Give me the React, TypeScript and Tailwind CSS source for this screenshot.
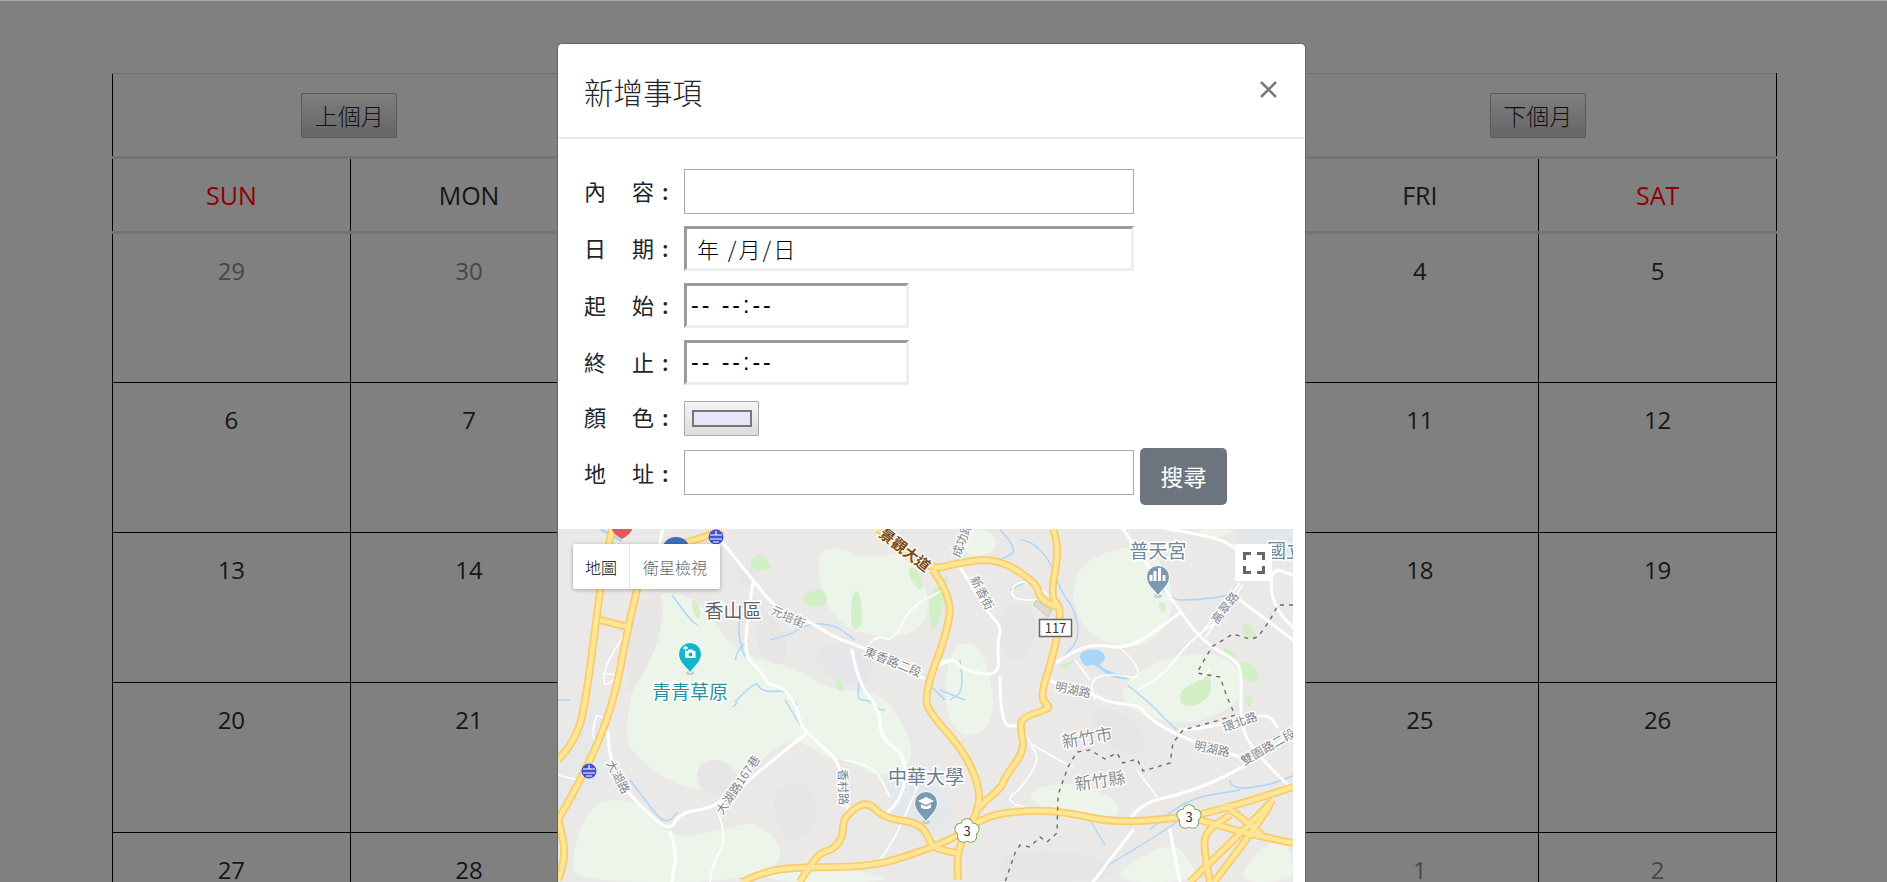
import React from "react";

const weeks: [string, boolean][][] = [
  [["29", true], ["30", true], ["1", false], ["2", false], ["3", false], ["4", false], ["5", false]],
  [["6", false], ["7", false], ["8", false], ["9", false], ["10", false], ["11", false], ["12", false]],
  [["13", false], ["14", false], ["15", false], ["16", false], ["17", false], ["18", false], ["19", false]],
  [["20", false], ["21", false], ["22", false], ["23", false], ["24", false], ["25", false], ["26", false]],
  [["27", false], ["28", false], ["29", false], ["30", false], ["31", false], ["1", true], ["2", true]],
];
const days = ["SUN", "MON", "TUE", "WED", "THU", "FRI", "SAT"];

function smooth(p: string, closed = false) {
  const pts = p.trim().split(/\s+/).map((s) => s.split(",").map(Number));
  if (pts.length < 3) return `M${pts.map((q) => q.join(" ")).join("L")}`;
  const mid = (a: number[], b: number[]) => [(a[0] + b[0]) / 2, (a[1] + b[1]) / 2];
  if (closed) {
    const n = pts.length;
    const s = mid(pts[n - 1], pts[0]);
    let d = `M${s[0]} ${s[1]}`;
    pts.forEach((q, i) => {
      const m = mid(q, pts[(i + 1) % n]);
      d += `Q${q[0]} ${q[1]} ${m[0]} ${m[1]}`;
    });
    return d + "Z";
  }
  let d = `M${pts[0][0]} ${pts[0][1]}`;
  for (let i = 1; i < pts.length - 1; i++) {
    const m = mid(pts[i], pts[i + 1]);
    d += `Q${pts[i][0]} ${pts[i][1]} ${m[0]} ${m[1]}`;
  }
  const l = pts[pts.length - 1];
  return d + `L${l[0]} ${l[1]}`;
}

const grayPatches = [
  "640,600 665,590 660,640 640,680 625,700 628,640",
  "760,600 790,640 780,670 755,650",
  "700,760 730,760 745,790 715,800 695,785",
  "770,790 800,780 820,800 810,840 780,840",
  "1000,600 1040,610 1030,660 1000,660",
  "1090,700 1140,720 1150,760 1090,740",
  "1000,850 1080,850 1120,870 1100,882 1000,882",
];
const lightGreen = [
  "660,590 700,600 735,655 790,665 830,690 860,690 890,700 920,760 880,780 850,760 830,760 800,740 780,745 760,760 740,780 720,790 690,790 660,775 640,760 625,740 630,700 640,660 655,610",
  "590,800 640,800 670,840 720,830 760,820 790,860 740,882 580,882 570,860",
  "815,560 830,545 870,560 900,550 930,590 925,630 880,640 830,620",
  "1080,560 1150,540 1180,600 1150,650 1090,640 1070,600",
  "1150,660 1230,650 1250,700 1180,730 1110,700",
  "1100,882 1170,840 1190,860 1200,882",
  "1230,882 1280,830 1293,860 1293,882",
  "947,650 975,640 990,670 995,720 970,740 945,720",
  "1025,790 1080,780 1130,810 1090,825 1040,810",
  "750,882 790,860 860,870 900,882",
  "960,529 990,529 1000,550 965,560",
  "1190,529 1240,529 1215,540",
];
const green = [
  "750,560 760,552 773,565 768,571 752,570",
  "803,592 826,588 828,606 804,608",
  "852,592 860,590 863,628 850,630",
  "906,570 915,566 925,585 918,592",
  "834,680 840,677 845,690 838,692",
  "691,597 698,604 702,618 694,618",
  "1158,605 1162,600 1168,608 1162,614",
  "1248,621 1258,636 1250,640 1240,630",
  "1180,690 1200,680 1210,672 1212,695 1195,707 1180,705",
  "1240,660 1255,665 1260,680 1248,684 1240,675",
  "1222,646 1232,650 1238,660 1228,660",
  "1060,665 1075,660 1068,668 1060,670",
  "1245,695 1252,695 1252,705 1246,708",
  "950,570 934,590 928,600 932,640 945,600",
];
const yellow = [
  "558,760 577,740 587,693 600,590 606,560 612,529",
  "558,820 565,843 563,867 558,880",
  "558,820 583,777 613,707 628,627 638,587 643,553 687,543 723,530",
  "600,620 628,627",
  "878,529 905,550 933,570 957,563 997,558 1037,583 1040,600 1060,608",
  "1053,529 1060,547 1050,597 1062,608 1055,650 1042,690 1043,702 1052,708 1023,717 1020,727 1025,750 1005,777 1002,787 983,803 978,810",
  "933,570 952,597 947,633 923,697 933,717 963,750 980,787 978,813 957,848 958,880",
  "742,882 760,873 793,867 870,867 917,853 957,837 987,815 1033,810 1063,812 1117,823 1177,818 1200,815 1253,800 1293,787",
  "1200,820 1240,832 1293,843",
  "1190,882 1237,837 1273,800",
  "1210,882 1203,847 1207,830 1230,815",
  "1214,882 1250,835 1270,805",
  "1225,805 1250,825 1262,835",
  "800,882 817,853 833,850 843,837 843,817 867,800 883,818 920,823 930,840 932,847 950,852 958,853",
];
const white = [
  "723,543 753,580 777,610 813,623 833,637 870,650 923,678",
  "753,583 747,620 745,657 760,670 768,685 783,687 797,707 800,723 807,733 823,747 840,763 848,810",
  "807,733 770,762 717,808 680,812 670,832 645,810 627,792 610,760 608,732",
  "670,832 677,850 672,882",
  "852,650 858,683 880,710 880,737 907,757 903,797 883,817",
  "663,529 657,553",
  "1123,529 1170,597 1203,643 1237,660 1242,677 1240,720 1250,747 1293,790",
  "1047,680 1090,693 1110,703 1140,705 1147,717 1180,737 1240,757",
  "1057,662 1080,647 1103,645 1120,648 1140,642 1180,613",
  "1180,730 1210,728 1267,712 1277,727",
  "940,663 953,657 962,670 1000,677 997,643 1002,627 988,613 960,567",
  "1000,677 1000,727 1020,725",
  "1293,627 1273,610 1270,567 1293,575",
  "1130,820 1140,803 1187,793 1240,770 1293,733",
  "1093,882 1133,830",
  "1170,830 1180,882",
  "1167,529 1220,537 1240,553 1272,560",
  "1240,600 1293,640",
  "937,667 950,660",
];
const thin = [
  "717,810 728,837 713,863 710,882",
  "870,643 878,635 893,642 910,607 943,590",
  "558,775 577,780",
  "623,637 605,663 603,690 620,672",
  "603,673 615,675",
  "597,715 590,735 600,745 610,720 597,715",
  "843,760 873,763 890,797",
  "1030,743 1053,757 1073,767",
  "1137,770 1157,797",
  "1240,583 1200,635",
  "1243,585 1205,638",
  "1020,725 1030,743 1040,760 1020,790 1005,800 1030,810",
  "1048,595 1030,580 1012,585 1012,600 1048,600",
  "1120,648 1135,660 1140,680 1110,673 1090,680 1095,700",
  "1090,680 1075,660",
  "1200,680 1210,670",
  "920,780 900,830 880,860",
  "1137,690 1160,680 1190,640 1220,620",
];
const water = [
  "672,595 690,620 698,625",
  "745,657 738,640 740,610 745,600",
  "748,640 738,650 735,660",
  "735,702 756,680 760,690 775,692 783,690 797,705",
  "785,700 800,725",
  "738,702 733,707",
  "630,780 645,800 665,825 678,812",
  "860,680 855,700 870,700 880,710 885,710",
  "770,640 790,635 810,623 835,625 855,640",
  "1020,540 1030,540 1050,560 1060,590 1075,610 1080,640 1060,660",
  "1010,590 1030,580",
  "1127,685 1147,700 1163,717 1177,730",
  "1150,570 1165,600 1200,600 1230,595",
  "1000,530 1020,550 1000,560",
  "1090,820 1105,845",
  "1230,780 1230,790 1270,785 1295,775",
  "1150,830 1180,800 1240,790",
  "1100,870 1150,840 1180,820",
  "945,700 925,680",
  "558,700 570,700",
  "940,690 965,700",
  "960,660 965,690 950,700",
];
const labels: [string, number, number, number, number, string, string?][] = [
  ["元培街", 788, 617, 25, 12, "#80868b"],
  ["東香路二段", 893, 662, 22, 12, "#80868b"],
  ["大湖路", 618, 777, 62, 12, "#80868b"],
  ["大湖路167巷", 738, 785, -56, 12, "#80868b"],
  ["新香街", 982, 593, 62, 12, "#80868b"],
  ["明湖路", 1073, 690, 12, 12, "#80868b"],
  ["明湖路", 1212, 749, 12, 12, "#80868b"],
  ["環北路", 1240, 722, -20, 12, "#80868b"],
  ["雙園路二段", 1268, 747, -30, 12, "#80868b"],
  ["高翠路", 1225, 608, -52, 12, "#80868b"],
  ["成功路", 962, 540, -70, 12, "#80868b"],
  ["香村路", 843, 787, 88, 12, "#80868b"],
  ["新竹市", 1087, 738, -10, 17, "#8f8f8f"],
  ["新竹縣", 1100, 781, -8, 17, "#8f8f8f"],
  ["景觀大道", 905, 550, 38, 15, "#7b4a12", "bold"],
];

function Rail({ x, y }: { x: number; y: number }) {
  return (
    <g>
      <circle cx={x} cy={y} r={7.5} fill="#3f51d6" />
      <path d={`M${x - 6} ${y - 2}h12M${x - 6} ${y + 2}h12M${x} ${y - 6}v4M${x - 3} ${y + 5}h6`} stroke="#fff" strokeWidth={1.2} />
    </g>
  );
}
function Flower({ x, y }: { x: number; y: number }) {
  const lobes = [0, 72, 144, 216, 288].map((a) => {
    const r = (a - 90) * (Math.PI / 180);
    return [x + 6.5 * Math.cos(r), y + 6.5 * Math.sin(r)];
  });
  return (
    <g>
      {lobes.map(([a, b], i) => <circle key={i} cx={a} cy={b} r={5.5} fill="#5c9c3c" stroke="#5c9c3c" strokeWidth={1.6} />)}
      {lobes.map(([a, b], i) => <circle key={i} cx={a} cy={b} r={5.5} fill="#fff" />)}
      <circle cx={x} cy={y} r={6} fill="#fff" />
      <text x={x} y={y + 4.5} textAnchor="middle" fontSize={13} fill="#333">3</text>
    </g>
  );
}
function Pin({ x, y, fill }: { x: number; y: number; fill: string }) {
  return (
    <g>
      <ellipse cx={x} cy={y + 19} rx={4} ry={2} fill="#c9cbce" />
      <path d={`M${x} ${y + 19}C${x - 2} ${y + 14} ${x - 11.5} ${y + 9} ${x - 11.5} ${y}A11.5 11.5 0 1 1 ${x + 11.5} ${y}C${x + 11.5} ${y + 9} ${x + 2} ${y + 14} ${x} ${y + 19}Z`} fill={fill} stroke="#fff" strokeWidth={1} />
    </g>
  );
}

function MapArt() {
  return (
    <svg viewBox="558 529 735 353" className="block h-[353px] w-[735px] font-['Noto_Sans_CJK_TC','Noto_Sans',sans-serif]">
      <rect x={558} y={529} width={735} height={353} fill="#ebe9e7" />
      <polygon points="558,740 600,700 610,760 590,810 558,830" fill="#e6e8ea" />
      <polygon points="1235,529 1293,529 1293,560 1240,555" fill="#e3e7ea" />
      <path d={smooth("880,770 925,775 960,810 940,835 900,835", true)} fill="#e4e8eb" />
      <path d={smooth("735,560 760,565 750,590 735,580", true)} fill="#e4e7ea" />
      <path d={smooth("810,650 850,640 880,650 865,690 830,680", true)} fill="#e4e6e9" />
      {lightGreen.map((p, i) => <path key={i} d={smooth(p, true)} fill="#edf5ea" />)}
      {grayPatches.map((p, i) => <path key={i} d={smooth(p, true)} fill="#e8e6e4" />)}
      {green.map((p, i) => <path key={i} d={smooth(p, true)} fill="#d3efc8" />)}
      {water.map((p, i) => <path key={i} d={smooth(p)} fill="none" stroke="#aad6fa" strokeWidth={1.4} />)}
      <path d={smooth("1077,652 1100,648 1107,660 1097,665 1113,673 1130,677 1128,680 1110,677 1093,663 1085,668", true)} fill="#a8d6fb" />
      <polyline points="600,529 622,541" stroke="#aad6fa" strokeWidth={3} fill="none" />
      {thin.map((p, i) => <path key={i} d={smooth(p)} fill="none" stroke="#fff" strokeWidth={1.6} />)}
      {white.map((p, i) => <path key={i} d={smooth(p)} fill="none" stroke="#fff" strokeWidth={3} strokeLinecap="round" />)}
      {yellow.map((p, i) => <path key={i} d={smooth(p)} fill="none" stroke="#f8cd68" strokeWidth={8} />)}
      {yellow.map((p, i) => <path key={i} d={smooth(p)} fill="none" stroke="#fee597" strokeWidth={4.5} />)}
      <polyline
        points="1293,605 1278,605 1270,620 1258,637 1250,639 1233,634 1213,646 1207,655 1197,673 1220,677 1227,697 1235,715 1220,720 1183,730 1173,743 1170,763 1143,771 1137,759 1123,763 1117,753 1105,759 1090,750 1077,752 1068,767 1058,795 1057,833 1047,842 1040,837 1030,847 1020,845 1015,853 1005,882"
        fill="none" stroke="#6b6b6b" strokeWidth={1.4} strokeDasharray="4 5"
      />
      <path d="M1036 600l16 10-4 7-14-12z" fill="#dedad2" stroke="#c9c4b8" />
      {labels.map(([t, x, y, r, s, c, w], i) => (
        <text key={i} x={x} y={y + s * 0.35} textAnchor="middle" fontSize={s} fill={c} fontWeight={w} transform={`rotate(${r} ${x} ${y})`} stroke="#fff" strokeWidth={2.5} paintOrder="stroke">{t}</text>
      ))}
      <text x={733} y={618} textAnchor="middle" fontSize={19} fill="#5f6368" stroke="#fff" strokeWidth={3} paintOrder="stroke">香山區</text>
      <text x={690} y={699} textAnchor="middle" fontSize={19} fill="#28909f" stroke="#fff" strokeWidth={3} paintOrder="stroke">青青草原</text>
      <text x={926} y={784} textAnchor="middle" fontSize={19} fill="#6c7f8e" stroke="#fff" strokeWidth={3} paintOrder="stroke">中華大學</text>
      <text x={1158} y={558} textAnchor="middle" fontSize={19} fill="#6f8797" stroke="#fff" strokeWidth={3} paintOrder="stroke">普天宮</text>
      <text x={1267} y={558} fontSize={19} fill="#6f8797" stroke="#fff" strokeWidth={3} paintOrder="stroke">國立</text>
      <path d="M612 529h20c0 3-6 8-10 10-4-2-10-7-10-10z" fill="#e05a5a" />
      <ellipse cx={676} cy={548} rx={13} ry={11} fill="#3d6fb8" />
      <Rail x={716} y={537} />
      <Rail x={589} y={771} />
      <Pin x={690} y={654} fill="#12b5cb" />
      <path d="M685 651h2.500l1-1.500h4l1 1.500h2v7h-10.500z" fill="#fff" />
      <circle cx={690.500} cy={654.500} r={2} fill="#12b5cb" />
      <path d="M683 648h5M685.500 645.500v5" stroke="#fff" strokeWidth={1.400} />
      <Pin x={926} y={803} fill="#7a9ab0" />
      <path d="M918 801l8-4 8 4-8 4zM921 804v3.500c3 2 7 2 10 0v-3.500l-5 2.500z" fill="#fff" />
      <Pin x={1158} y={577} fill="#7a9ab0" />
      <path d="M1150 584v-6h3v6zM1154 584v-10h3v10zM1158.500 584v-13h3v13zM1163 584v-6h3v6z" fill="#fff" transform="translate(-.5 -3)" />
      <Flower x={967} y={831} />
      <Flower x={1189} y={817} />
      <rect x={1039.500} y={619.500} width={32} height={17} fill="#fff" stroke="#666" strokeWidth={1.500} />
      <text x={1055.500} y={633} textAnchor="middle" fontSize={13} fill="#333">117</text>
    </svg>
  );
}

function Label({ text }: { text: string }) {
  return (
    <span className="mb-[3px] flex w-[100px] shrink-0 text-[22px] leading-[30px] tracking-[2px] text-[#212529]">
      <span>{text}</span>
      <span className="ml-[6px] font-medium">:</span>
    </span>
  );
}

const inset = "border-[3px] border-t-[#9a9a9a] border-l-[#9a9a9a] border-r-[#eeeeee] border-b-[#eeeeee]";

export default function App() {
  return (
    <div className="relative h-screen overflow-hidden border-t border-[#a9a9a9] bg-[#808080] pt-[72px] font-['Open_Sans','Noto_Sans_CJK_TC',sans-serif]">
      <table className="ml-[112px] w-[1665px] table-fixed border-collapse text-center text-[24px] leading-[36px] text-[#141618]">
        <thead>
          <tr className="h-[84px]">
            <th colSpan={2} className="border-x border-t border-b-[3px] border-x-black border-t-[#6e6e6e] border-b-[#737373] font-normal">
              <button className="mr-[2px] h-[45px] w-[96px] rounded-[2px] border border-[#5a5a5a] bg-gradient-to-b from-[#7e7e7e] to-[#666666] text-[23px] font-light text-[#111] font-['Noto_Sans_CJK_TC',sans-serif]">上個月</button>
            </th>
            <th colSpan={3} className="border-t border-b-[3px] border-t-[#6e6e6e] border-b-[#737373]" />
            <th colSpan={2} className="border-x border-t border-b-[3px] border-x-black border-t-[#6e6e6e] border-b-[#737373] font-normal">
              <button className="mr-[2px] h-[45px] w-[96px] rounded-[2px] border border-[#5a5a5a] bg-gradient-to-b from-[#7e7e7e] to-[#666666] text-[23px] font-light text-[#111] font-['Noto_Sans_CJK_TC',sans-serif]">下個月</button>
            </th>
          </tr>
          <tr className="h-[75px]">
            {days.map((d, i) => (
              <th key={d} className={`border-x border-b-[3px] border-x-black border-b-[#737373] text-[25px] font-medium ${i === 0 || i === 6 ? "text-[#8f0000]" : ""}`}>{d}</th>
            ))}
          </tr>
        </thead>
        <tbody>
          {weeks.map((w, r) => (
            <tr key={r} className="h-[150px]">
              {w.map(([n, dim], i) => (
                <td key={i} className={`border border-black pt-[19px] align-top ${dim ? "text-[#474747]" : ""}`}>{n}</td>
              ))}
            </tr>
          ))}
        </tbody>
      </table>

      <div className="absolute left-[557px] top-[42px] w-[749px] rounded-[5px] border border-[#666666] bg-white pb-[30px] font-['Noto_Sans_CJK_TC',sans-serif]">
        <div className="flex h-[95px] items-center justify-between rounded-t-[5px] border-b-2 border-[#e9ecef] pl-[26px] pr-[28px]">
          <h5 className="text-[29.5px] font-light leading-[40px] text-[#212529]">新增事項</h5>
          <svg width="17" height="17" viewBox="0 0 17 17" className="mb-[2px]">
            <path d="M1 1l15 15M16 1L1 16" stroke="#7a7a7a" strokeWidth="2.500" />
          </svg>
        </div>
        <div className="pl-[26px] pt-[30px]">
          <div className="mb-3 flex h-[45px] items-center">
            <Label text="內　容" />
            <input className="h-[45px] w-[450px] border border-[#a9a9a9]" />
          </div>
          <div className="mb-3 flex h-[45px] items-center">
            <Label text="日　期" />
            <div className={`flex h-[45px] w-[450px] items-center pl-[10px] text-[22px] font-light tracking-[2px] text-black ${inset}`}>年 /月/日</div>
          </div>
          <div className="mb-3 flex h-[45px] items-center">
            <Label text="起　始" />
            <div className={`flex h-[45px] w-[225px] items-center pl-[4px] font-['Liberation_Sans',sans-serif] text-[23px] tracking-[3px] text-black ${inset}`}>-- --:--</div>
          </div>
          <div className="mb-3 flex h-[45px] items-center">
            <Label text="終　止" />
            <div className={`flex h-[45px] w-[225px] items-center pl-[4px] font-['Liberation_Sans',sans-serif] text-[23px] tracking-[3px] text-black ${inset}`}>-- --:--</div>
          </div>
          <div className="mb-3 flex h-[39px] items-start pt-[4px]">
            <Label text="顏　色" />
            <div className="flex h-[35px] w-[75px] items-center justify-center rounded-[1px] border border-[#a9a9a9] bg-gradient-to-b from-[#f5f5f5] to-[#dcdcdc]">
              <div className="h-[17px] w-[60px] border-2 border-[#777777] bg-[#e6e6fa]" />
            </div>
          </div>
          <div className="flex h-[57px] items-start">
            <span className="mt-[9px] flex"><Label text="地　址" /></span>
            <input className="mt-[2px] h-[45px] w-[450px] border border-[#a9a9a9]" />
            <button className="ml-[6px] h-[57px] w-[87px] rounded-[5px] bg-[#6c757d] text-[23px] text-white">搜尋</button>
          </div>
        </div>
        <div className="relative mr-[12px] mt-[24px]">
          <MapArt />
          <div className="absolute left-[15px] top-[15px] flex h-[45px] rounded-[2px] bg-white text-[16px] font-light shadow-[0_1px_4px_rgba(0,0,0,0.3)]">
            <span className="flex w-[57px] items-center justify-center border-r border-[#e6e6e6] text-black">地圖</span>
            <span className="flex w-[90px] items-center justify-center text-[#666666]">衛星檢視</span>
          </div>
          <div className="absolute right-[21px] top-[15px] flex h-[37px] w-[37px] items-center justify-center bg-white">
            <svg width="22" height="22" viewBox="0 0 22 22">
              <path d="M1.500 8V1.500H8M14 1.500h6.500V8M20.500 14v6.500H14M8 20.500H1.500V14" fill="none" stroke="#666666" strokeWidth="3" />
            </svg>
          </div>
        </div>
      </div>
    </div>
  );
}
